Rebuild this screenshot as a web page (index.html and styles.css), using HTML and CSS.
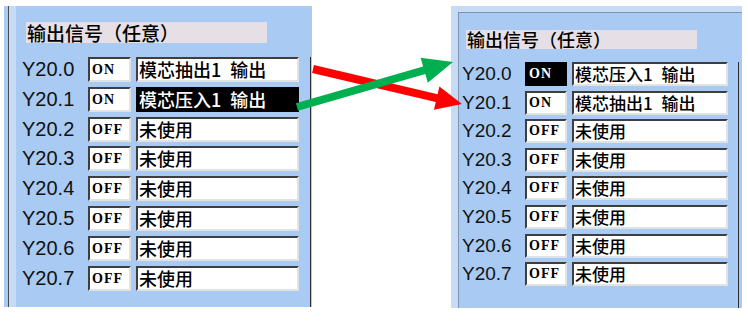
FILE: index.html
```html
<!DOCTYPE html>
<html lang="zh">
<head>
    <meta charset="UTF-8">
    <meta name="viewport" content="width=device-width, initial-scale=1.0">
    <title>输出信号</title>
    <link rel="stylesheet" href="styles.css">
</head>
<body>
    <div class="stage">
        <!-- 修改前 -->
        <section class="panel panel-left">
            <div class="panel-body">
                <div class="titulo">输出信号（任意）</div>
                <div class="filas">
                    <span class="etiqueta">Y20.0</span><span class="estado">ON</span><span class="nombre">模芯抽出1 输出</span>
                    <span class="etiqueta">Y20.1</span><span class="estado">ON</span><span class="nombre activo">模芯压入1 输出</span>
                    <span class="etiqueta">Y20.2</span><span class="estado">OFF</span><span class="nombre">未使用</span>
                    <span class="etiqueta">Y20.3</span><span class="estado">OFF</span><span class="nombre">未使用</span>
                    <span class="etiqueta">Y20.4</span><span class="estado">OFF</span><span class="nombre">未使用</span>
                    <span class="etiqueta">Y20.5</span><span class="estado">OFF</span><span class="nombre">未使用</span>
                    <span class="etiqueta">Y20.6</span><span class="estado">OFF</span><span class="nombre">未使用</span>
                    <span class="etiqueta">Y20.7</span><span class="estado">OFF</span><span class="nombre">未使用</span>
                </div>
            </div>
        </section>

        <!-- 修改后 -->
        <section class="panel panel-right">
            <div class="panel-body">
                <div class="titulo">输出信号（任意）</div>
                <div class="filas">
                    <span class="etiqueta">Y20.0</span><span class="estado activo">ON</span><span class="nombre">模芯压入1 输出</span>
                    <span class="etiqueta">Y20.1</span><span class="estado">ON</span><span class="nombre">模芯抽出1 输出</span>
                    <span class="etiqueta">Y20.2</span><span class="estado">OFF</span><span class="nombre">未使用</span>
                    <span class="etiqueta">Y20.3</span><span class="estado">OFF</span><span class="nombre">未使用</span>
                    <span class="etiqueta">Y20.4</span><span class="estado">OFF</span><span class="nombre">未使用</span>
                    <span class="etiqueta">Y20.5</span><span class="estado">OFF</span><span class="nombre">未使用</span>
                    <span class="etiqueta">Y20.6</span><span class="estado">OFF</span><span class="nombre">未使用</span>
                    <span class="etiqueta">Y20.7</span><span class="estado">OFF</span><span class="nombre">未使用</span>
                </div>
            </div>
        </section>
    </div>

    <!-- flechas -->
    <svg class="flechas" width="748" height="321" viewBox="0 0 748 321">
        <polygon fill="#ff0000" points="313.9,65.1 437.6,94.2 439.4,86.4 462,104 433.9,109.7 435.8,101.9 312.1,72.9"/>
        <polygon fill="#00b050" points="298.1,110.8 425.3,74.1 427.8,82.8 453,62 420.6,57.8 423.1,66.5 295.9,103.2"/>
    </svg>
</body>
</html>
```

FILE: styles.css
```css
body {
    margin: 0;
    padding: 0;
    background-color: #fff;
    font-family: "Liberation Sans", Arial, sans-serif;
    position: relative;
    width: 748px;
    height: 321px;
    overflow: hidden;
}

.stage {
    display: flex;
    align-items: flex-start;
    padding: 6px 0 0 4px;
}

.panel {
    box-sizing: border-box;
    display: flex;
}

.panel-body {
    flex: 1;
    display: flex;
    flex-direction: column;
    background-color: #a9caf2;
}

.titulo {
    background-color: #e6e0e6;
    color: #000;
    font-family: "Noto Sans CJK SC", sans-serif;
    font-weight: 500;
    white-space: nowrap;
}

.filas {
    flex: 1;
    display: grid;
    align-content: start;
    border-right: 1px solid #2e2e2e;
}

.etiqueta {
    color: #111;
    white-space: nowrap;
}

.estado,
.nombre {
    box-sizing: border-box;
    background-color: #fff;
    border-top: 2px solid #3e3e3e;
    border-left: 2px solid #3e3e3e;
    border-bottom: 2px solid #e2e2e2;
    border-right: 2px solid #e2e2e2;
    color: #000;
    white-space: pre;
    overflow: hidden;
}

.estado {
    font-family: "Liberation Serif", serif;
    font-weight: bold;
    font-size: 14px;
    letter-spacing: 1px;
    padding-left: 2px;
}

.nombre {
    font-family: "Noto Sans CJK SC", sans-serif;
    font-weight: 500;
    word-spacing: 5px;
    padding-left: 1px;
}

.activo {
    background-color: #000;
    color: #fff;
    border-color: #000;
}

/* panel izquierdo */
.panel-left {
    width: 308px;
    height: 301px;
    background-color: #a9caf2;
    padding-left: 4px;
}

.panel-left .panel-body {
    border-left: 1px solid #4b4b4b;
    box-shadow: inset 7px 0 0 #c6dbf5;
    padding-top: 16px;
}

.panel-left .titulo {
    margin-left: 17px;
    width: 241px;
    height: 21px;
    font-size: 19px;
    line-height: 21px;
    padding-left: 1px;
    box-sizing: border-box;
}

.panel-left .filas {
    margin: 14px 1px 0 13px;
    grid-template-columns: 61px 43px 163px;
    grid-auto-rows: 25px;
    column-gap: 5px;
    row-gap: 4.8px;
}

.panel-left .etiqueta {
    font-size: 20px;
    line-height: 25px;
}

.panel-left .estado {
    line-height: 21px;
}

.panel-left .nombre {
    font-size: 18px;
    line-height: 21px;
}

/* panel derecho */
.panel-right {
    width: 291px;
    height: 302px;
    margin-left: 139px;
    background-color: #c6dbf5;
    padding: 6px 0 0 7px;
}

.panel-right .panel-body {
    border-top: 1px solid #7f93ab;
    border-left: 1px solid #7f93ab;
    padding-top: 17px;
}

.panel-right .titulo {
    margin-left: 7px;
    width: 231px;
    height: 19px;
    font-size: 18px;
    line-height: 19px;
    padding-left: 1px;
    box-sizing: border-box;
}

.panel-right .filas {
    margin: 13px 3px 0 3px;
    grid-template-columns: 58px 42px 156px;
    grid-auto-rows: 24px;
    column-gap: 5px;
    row-gap: 4.6px;
}

.panel-right .etiqueta {
    font-size: 19px;
    line-height: 24px;
}

.panel-right .estado {
    line-height: 20px;
}

.panel-right .nombre {
    font-size: 17px;
    line-height: 20px;
}

.flechas {
    position: absolute;
    left: 0;
    top: 0;
    pointer-events: none;
}
```
